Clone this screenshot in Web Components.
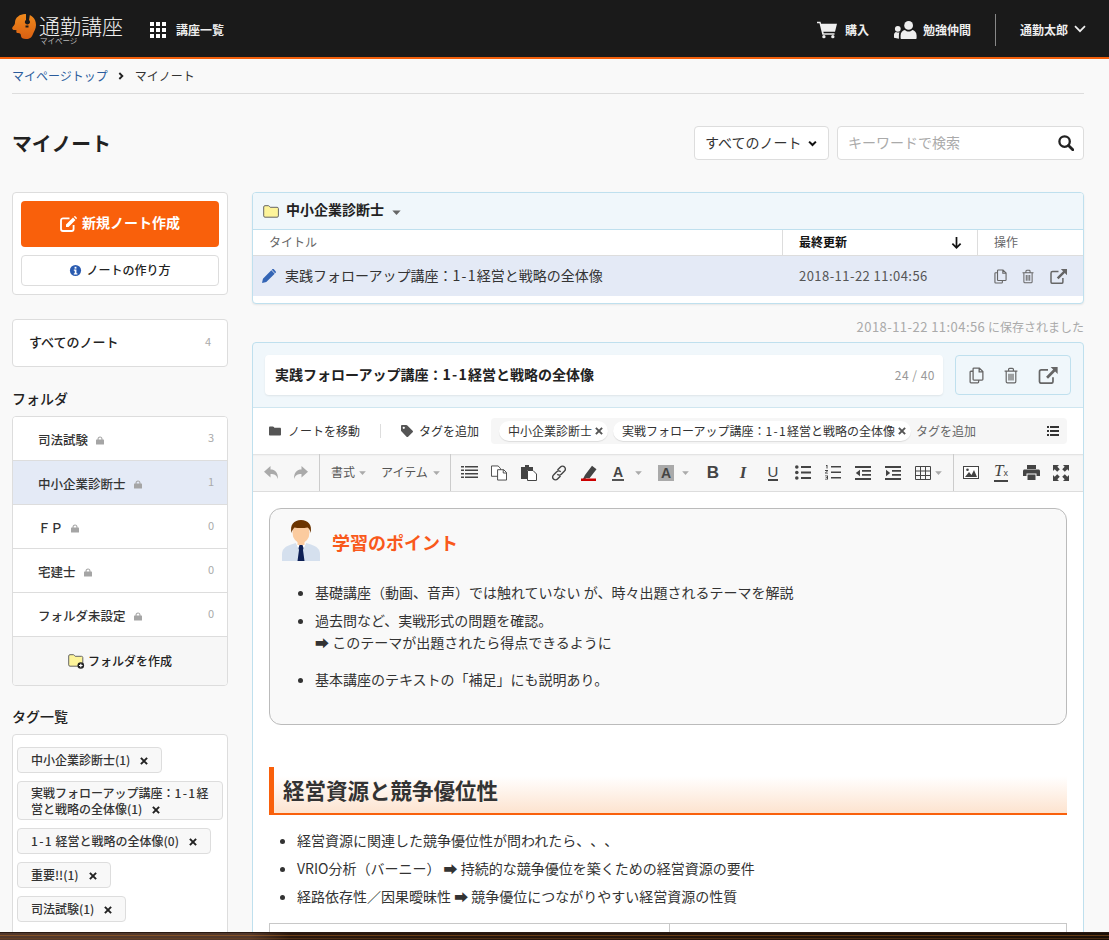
<!DOCTYPE html>
<html lang="ja"><head><meta charset="utf-8"><title>マイノート</title>
<style>
html,body{margin:0;height:940px;overflow:hidden;background:#f9f9f9;color:#333;font-family:"Noto Sans CJK JP","Liberation Sans",sans-serif;font-size:14px;line-height:1.4;text-spacing-trim:space-all}
</style></head><body>
<app-header></app-header>
<bread-crumb></bread-crumb>
<page-head></page-head>
<page-columns>
  <side-bar slot="side"></side-bar>
  <note-list slot="main"></note-list>
  <save-note slot="main"><span style="font-size:13px;letter-spacing:.45px">2018-11-22 11:04:56</span> に保存されました</save-note>
  <note-editor slot="main"></note-editor>
</page-columns>
<wood-strip></wood-strip>
<script>
const ICONS={
 cart:['0 0 24 20','<path fill="currentColor" d="M0 0h4.2l.7 2.6H24l-2.4 9.4H7.6l.5 2H21v1.8H6.4L3 1.8H0z"/><circle cx="8.3" cy="18" r="2" fill="currentColor"/><circle cx="19" cy="18" r="2" fill="currentColor"/>'],
 users:['0 0 23 18','<g fill="currentColor"><circle cx="14.6" cy="4.4" r="4.4"/><path d="M7.6 18c-.6 0-1-.4-1-1v-2.600c0-3 2-5.200 4.400-5.400 1 1 2.300 1.500 3.600 1.500s2.600-.5 3.600-1.500c2.400.2 4.400 2.400 4.400 5.400V17c0 .6-.4 1-1 1z"/><circle cx="3.800" cy="7.800" r="2.900"/><path d="M0 16.800v-3c0-1.600 1-2.800 2.200-2.900.6.500 1 .7 1.700.7s1-.1 1.500-.4c-.3.900-.5 1.900-.5 3.100v3.500z"/></g>'],
 chev:['0 0 12 8','<path fill="none" stroke="currentColor" stroke-width="1.700" d="M1 1.200l5 5 5-5"/>'],
 chevb:['0 0 12 8','<path fill="none" stroke="currentColor" stroke-width="2.800" d="M1.500 1.500L6 6l4.500-4.500"/>'],
 search:['0 0 16 16','<circle cx="6.600" cy="6.600" r="5.200" fill="none" stroke="currentColor" stroke-width="2.300"/><path d="M10.500 10.500l4.300 4.300" stroke="currentColor" stroke-width="2.800" stroke-linecap="round"/>'],
 edit:['0 0 17 16','<path fill="none" stroke="currentColor" stroke-width="1.800" d="M9.500 2.400H3a2 2 0 0 0-2 2V13a2 2 0 0 0 2 2h8.600a2 2 0 0 0 2-2V9"/><path fill="currentColor" d="M6 8.600L13 1.600l2.500 2.500-7 7H6zM13.800.8l.7-.6c.3-.2.6-.2.800 0l1.500 1.500c.2.200.2.500 0 .8l-.6.700z"/>'],
 info:['0 0 14 14','<circle cx="7" cy="7" r="6" fill="#2a5bb0"/><rect x="6" y="3" width="2" height="2" fill="#fff"/><path fill="#fff" d="M5.200 6h2.800v4h1v1.200H5.200V10h1V7.200h-1z"/>'],
 folder:['0 0 16 13','<path fill="#fdf49a" stroke="#666" stroke-width="1" d="M.7 2c0-.8.5-1.300 1.200-1.300h3.400c.5 0 .8.200 1.100.6l.8 1h6.900c.8 0 1.300.5 1.300 1.200v7.400c0 .8-.5 1.300-1.300 1.300H2c-.8 0-1.300-.5-1.300-1.300z"/>'],
 folderplus:['0 0 17 15','<path fill="#fdf49a" stroke="#666" stroke-width="1" d="M.7 2c0-.8.5-1.300 1.200-1.300h3.400c.5 0 .8.200 1.100.6l.8 1h6.300c.8 0 1.300.5 1.300 1.200v7.400c0 .8-.5 1.300-1.300 1.300H2c-.8 0-1.300-.5-1.300-1.300z"/><circle cx="12.800" cy="11.500" r="3.300" fill="#222"/><path d="M12.800 9.700v3.600M11 11.500h3.600" stroke="#fff" stroke-width="1.200"/>'],
 caret:['0 0 10 6','<path fill="currentColor" d="M0 .5h10L5 6z"/>'],
 pencil:['0 0 15 15','<path fill="#3465b5" d="M0 15l1-4.600L10 1.400l3.600 3.600-9 9zM11 .4c.5-.5 1.200-.5 1.700 0l1.900 1.900c.5.500.5 1.200 0 1.700l-.6.500-3.500-3.600z"/>'],
 copy:['0 0 14 16','<path fill="none" stroke="currentColor" stroke-width="1.200" d="M4.600 1H9.700L13 4.300v7.200c0 .5-.3.800-.8.800H4.600c-.5 0-.8-.3-.8-.8V1.800c0-.5.3-.8.800-.8zM9.500 1v3.500H13M3.800 4H1.800c-.5 0-.8.300-.8.800v9.400c0 .5.300.8.800.8h6.400c.5 0 .8-.3.800-.8v-1.900"/>'],
 trash:['0 0 14 16','<path fill="none" stroke="currentColor" stroke-width="1.200" d="M.6 3.600h12.800M2.200 3.600V14c0 .8.500 1.300 1.200 1.300h7.200c.7 0 1.200-.5 1.200-1.300V3.600M4.600 3.600V1.800c0-.6.400-1 1-1h2.800c.6 0 1 .4 1 1v1.800M5 6.200v6.700M7 6.200v6.700M9 6.200v6.700"/>'],
 ext:['0 0 17 15','<path fill="none" stroke="currentColor" stroke-width="1.500" d="M8.500 2.600H2.600C1.700 2.600 1 3.300 1 4.200v8.700c0 .9.700 1.400 1.600 1.400h8.800c.9 0 1.500-.6 1.500-1.400V9"/><path fill="currentColor" d="M10.800 0H17v6.200l-2.200-2.300-6.300 6.400-1.700-1.700 6.300-6.400z"/>'],
 down:['0 0 12 13','<path fill="none" stroke="currentColor" stroke-width="1.900" d="M6 0v11.500M1.500 7.200L6 11.700l4.500-4.500"/>'],
 lock:['0 0 9 9','<rect y="3.500" width="9" height="5.500" rx=".6" fill="currentColor"/><path fill="none" stroke="currentColor" stroke-width="1.200" d="M2.300 4V2.700C2.300 1.400 3.200.6 4.500.6s2.200.8 2.200 2.100V4"/>'],
 xmark:['0 0 9 9','<path stroke="currentColor" stroke-width="2.200" d="M1 1l7 7M8 1L1 8"/>'],
 fsolid:['0 0 13 10','<path fill="currentColor" d="M0 1.200C0 .5.500 0 1.200 0H4c.7 0 1 .3 1.300.7l.5.700h6c.7 0 1.200.5 1.200 1.200v6.200c0 .7-.5 1.200-1.200 1.200H1.200C.5 10 0 9.500 0 8.800z"/>'],
 tag:['0 0 13 13','<path fill="currentColor" d="M0 1.200C0 .5.500 0 1.200 0h4.600c.4 0 .8.200 1.100.5l5.700 5.700c.5.500.5 1.200 0 1.700l-4.900 4.700c-.5.500-1.200.500-1.700 0L.4 6.900C.1 6.600 0 6.300 0 5.900z"/><circle cx="3" cy="3" r="1.200" fill="#fff"/>'],
 list:['0 0 12 10','<path fill="currentColor" d="M0 0h2v2H0zM3 0h9v2H3zM0 4h2v2H0zM3 4h9v2H3zM0 8h2v2H0zM3 8h9v2H3z"/>'],
 undo:['0 0 14 13','<path fill="currentColor" d="M6.500 0v3.500C11 3.500 14 6 14 13c-1.400-3.800-3.500-5-7.500-5v3.500L0 5.800z"/>'],
 redo:['0 0 14 13','<path fill="currentColor" d="M7.500 0v3.500C3 3.500 0 6 0 13c1.400-3.800 3.500-5 7.500-5v3.500L14 5.800z"/>'],
 lines:['0 0 17 15','<path fill="currentColor" d="M0 1h3v1.500H0zM4 1h13v1.500H4zM0 4.500h3V6H0zM4 4.500h13V6H4zM0 8h3v1.500H0zM4 8h13v1.500H4zM0 11.500h3V13H0zM4 11.500h13V13H4z"/>'],
 copy2:['0 0 17 16','<path fill="#fff" stroke="#444" stroke-width="1" d="M.5.500h7L10 3v8.500H.5z"/><path fill="#fff" stroke="#444" stroke-width="1" d="M7 4.500h6.500l3 3v8H7z"/><path fill="none" stroke="#444" d="M13 4.500V8h3.500"/>'],
 paste:['0 0 16 16','<path fill="#444" d="M0 2h4V0h4v2h4v3H6v9H0z"/><path fill="#fff" stroke="#444" d="M6.500 5.500H12l3.500 3.500v6.500h-9z"/>'],
 link:['0 0 16 16','<path fill="none" stroke="#444" stroke-width="1.400" d="M6.500 5l3-3a2.700 2.700 0 0 1 4 0 2.700 2.700 0 0 1 0 4l-3.200 3.200a2.700 2.700 0 0 1-4 0M9.500 11l-3 3a2.700 2.700 0 0 1-4 0 2.700 2.700 0 0 1 0-4l3.200-3.200a2.700 2.700 0 0 1 4 0"/>'],
 marker:['0 0 16 16','<path fill="#444" d="M4 10L11 .8l4.500 3.500-7 9-3-.3-1.300 1H2z"/><rect x="0" y="13.500" width="15" height="2.500" fill="#c00"/>'],
 ul:['0 0 16 15','<g fill="#444"><circle cx="1.800" cy="2" r="1.800"/><circle cx="1.800" cy="7.500" r="1.800"/><circle cx="1.800" cy="13" r="1.800"/><path d="M6 1h10v2H6zM6 6.500h10v2H6zM6 12h10v2H6z"/></g>'],
 ol:['0 0 16 15','<g fill="#444"><path d="M6 1h10v1.600H6zM6 6.500h10v1.600H6zM6 12h10v1.600H6zM1 0h1.500v3.600H1.500V1H1zM0 5h3v1L1 7.800h2v.8H0v-.8l2-1.900H0zM0 10.500h3v4H0v-.8h2V13H.7v-.7H2v-1H0z"/></g>'],
 outdent:['0 0 16 14','<path fill="#444" d="M0 0h16v2H0zM7 4h9v1.800H7zM7 8h9v1.800H7zM0 12h16v2H0zM5 3.800v6.400L.8 7z"/>'],
 indent:['0 0 16 14','<path fill="#444" d="M0 0h16v2H0zM7 4h9v1.800H7zM7 8h9v1.800H7zM0 12h16v2H0zM1 3.800v6.400L5.200 7z"/>'],
 table:['0 0 16 14','<path fill="none" stroke="#444" stroke-width="1" d="M.5.500h15v13H.5zM.5 5h15M.5 9.500h15M5.500.500v13M10.500.500v13"/>'],
 image:['0 0 16 13','<rect x=".5" y=".5" width="15" height="12" fill="#fff" stroke="#444"/><path fill="#444" d="M2 11l4-5 2.500 3L11 4l3 7z"/><circle cx="4.500" cy="3.800" r="1.300" fill="#444"/>'],
 print:['0 0 17 15','<path fill="#444" d="M4 0h9v4H4zM1.500 4.500h14c.8 0 1.500.7 1.500 1.500v5h-3.500V8.500h-10V11H0V6c0-.8.700-1.500 1.500-1.500zM4.500 9.500h8V15h-8z"/>'],
 full:['0 0 16 16','<path fill="#444" d="M0 0h6L4.300 1.700 6.800 4.200 4.200 6.800 1.700 4.300 0 6zM16 0v6l-1.700-1.700-2.500 2.500-2.600-2.600 2.500-2.500L10 0zM0 16v-6l1.700 1.700 2.500-2.500 2.600 2.600-2.500 2.500L6 16zM16 16h-6l1.700-1.700-2.500-2.500 2.600-2.600 2.500 2.500L16 10z"/>'],
 logo:['0 0 24 25','<defs><linearGradient id="lg" x1="0" y1="0" x2="0" y2="1"><stop offset="0" stop-color="#f08a1c"/><stop offset="1" stop-color="#d95f12"/></linearGradient></defs><path fill="url(#lg)" d="M13 0c6 0 11 4 11 11 0 4-2 6-3 9-1 3-3 5-7 5-3 0-5-1-5-3s-1-3-3-3c-1.500 0-2-1-1.500-2.200C5 16 3.500 16.500 1.500 16 0 15.500-.3 14 1 12.600 2.500 11 3 10 3 8.500 3 3.500 8 0 13 0z"/><path fill="#1a1a1a" d="M14 0h4l-1 6c1 .8 1.300 2 .8 3-.6 1.200-2 1.800-3.300 1.300-1.300-.5-2-1.800-1.500-3.100.2-.6.500-1 1-1.300zM13.500 11.500h3v2h-3z"/>'],
 person:['0 0 38 41','<path fill="#d5e0ee" d="M0 41v-7c0-5 4-8 9-9.500l5-1.500h10l5 1.500c5 1.500 9 4.500 9 9.500v7z"/><path fill="#fff" d="M14 23h10l-2 5h-6z"/><path fill="#0d1f55" d="M17.500 25h3l1 3-.5 2 1.500 11h-7l1.500-11-.5-2z"/><ellipse cx="19" cy="12.500" rx="8.500" ry="10.500" fill="#fbcb9f"/><rect x="15.500" y="19" width="7" height="6" fill="#fbcb9f"/><path fill="#6b3400" d="M9.500 13C7.500 5 12 0 19 0s11.500 5 9.500 13c-.5-3-1.500-4.500-3-5.500C21 8.500 15 8 12.500 7.500 11 9 10 10.500 9.500 13z"/>']
};
const ONE='<span style="letter-spacing:1.300px">1-1</span>';
function def(tag,style,html,init){
  const t=document.createElement('template');
  t.innerHTML=`<style>${style}</style>${html}`;
  customElements.define(tag,class extends HTMLElement{
    connectedCallback(){
      if(this.shadowRoot)return;
      this.attachShadow({mode:'open'}).appendChild(t.content.cloneNode(true));
      if(init)init.call(this,this.shadowRoot);
    }
  });
}
customElements.define('x-icon',class extends HTMLElement{
  connectedCallback(){
    if(this.shadowRoot)return;
    const n=this.getAttribute('name'),w=this.getAttribute('w')||14,h=this.getAttribute('h')||w,c=this.getAttribute('c')||'inherit';
    const [vb,body]=ICONS[n];
    this.attachShadow({mode:'open'}).innerHTML=`<style>:host{display:inline-flex;flex:none;width:${w}px;height:${h}px;color:${c}}svg{display:block;width:100%;height:100%}</style><svg xmlns="http://www.w3.org/2000/svg" viewBox="${vb}" preserveAspectRatio="xMidYMid meet">${body}</svg>`;
  }
});
def('app-header',`
:host{display:flex;align-items:center;box-sizing:border-box;height:59px;background:#1a1a1a;border-bottom:2px solid #f4600c;color:#eee;padding:2px 23px 0 12px}
.logo{display:flex;gap:3px;align-items:flex-start;width:138px;height:35px;margin-top:3px}
.brand{display:flex;flex-direction:column;align-items:flex-start;margin-top:-1px}
.name{font-size:21px;line-height:24px;font-weight:300;color:#eee}
.sub{font-size:7.5px;line-height:8px;color:#bbb;margin-left:1px}
.grid{display:grid;grid-template-columns:repeat(3,4px);grid-auto-rows:4px;gap:2px;margin-right:10px}
.grid i{background:#fff}
.t{font-size:12px;font-weight:700;color:#eee;position:relative;top:1px}
.sp{flex:1}
.it{display:flex;align-items:center}
.div{width:1px;height:32px;background:#888;margin:0 24px}
`,`<div class="logo"><x-icon name="logo" w="24" h="25"></x-icon><div class="brand"><span class="name">通勤講座</span><span class="sub">マイページ</span></div></div>
<div class="grid"><i></i><i></i><i></i><i></i><i></i><i></i><i></i><i></i><i></i></div><span class="t">講座一覧</span>
<span class="sp"></span>
<div class="it" style="margin-right:25px"><x-icon name="cart" w="20" h="18" style="margin-right:8px"></x-icon><span class="t">購入</span></div>
<div class="it"><x-icon name="users" w="23" h="18" style="margin-right:6px"></x-icon><span class="t">勉強仲間</span></div>
<span class="div"></span>
<div class="it"><span class="t">通勤太郎</span><x-icon name="chev" w="12" h="8" style="margin-left:6px"></x-icon></div>`);
def('bread-crumb',`
:host{display:flex;align-items:center;box-sizing:border-box;height:35px;margin:0 25px 0 12px;border-bottom:1px solid #ddd;font-size:12px;color:#333}
a{color:#2b5c9c;text-decoration:none}
`,`<a href="#">マイページトップ</a><x-icon name="chevb" w="8" h="8" c="#222" style="margin:0 10px 0 9px;transform:rotate(-90deg)"></x-icon><span>マイノート</span>`);
def('page-head',`
:host{display:flex;align-items:center;height:34px;margin:32px 25px 32px 12px}
h1{margin:0;font-size:19.800px;line-height:28px;font-weight:700;color:#222;flex:1}
.sel,.q{display:flex;align-items:center;box-sizing:border-box;height:34px;background:#fff;border:1px solid #ddd;border-radius:4px}
.sel{width:135px;padding:0 11px 0 10px;font-size:14px;margin-right:8px;justify-content:space-between}
.q{width:247px;padding:0 9px 0 10px;color:#aaa;font-size:14px;justify-content:space-between}
`,`<h1>マイノート</h1><div class="sel"><span>すべてのノート</span><x-icon name="chevb" w="9" h="7" c="#111"></x-icon></div><div class="q"><span>キーワードで検索</span><x-icon name="search" w="16" h="16" c="#222"></x-icon></div>`);
def('page-columns',`
:host{display:flex;gap:24px;margin:0 25px 0 12px;align-items:flex-start}
.a{width:216px;flex:none}.b{width:832px;flex:none}
`,`<div class="a"><slot name="side"></slot></div><div class="b"><slot name="main"></slot></div>`);
def('folder-row',`
:host{display:flex;align-items:center;box-sizing:border-box;height:44px;padding:0 13px 0 25px;border-bottom:1px solid #ddd;font-weight:500;color:#333;background:#fff}
:host([on]){background:#e4eaf6}
span{font-size:12.500px;position:relative;top:1px}
b{margin-left:auto;font-weight:400;font-size:11px;color:#aaa;position:relative;top:-1px}
x-icon{margin:3px 0 0 8px}
`,`<span><slot></slot></span><x-icon name="lock" w="8" h="9" c="#a5a5a5"></x-icon><b></b>`,function(r){r.querySelector('b').textContent=this.getAttribute('n')});
def('tag-chip',`
:host{display:flex;align-items:center;box-sizing:border-box;min-height:26px;padding:3px 13px;background:#f8f8f8;border:1px solid #ddd;border-radius:4px;font-size:12px;line-height:15.500px;font-weight:500;color:#333;max-width:206px}
x-icon{margin-left:10px}
`,`<span><slot></slot><x-icon name="xmark" w="8" h="8" c="#222"></x-icon></span>`);
def('side-bar',`
:host{display:block}
.card{background:#fff;border:1px solid #ddd;border-radius:4px;box-sizing:border-box}
.new{padding:8px}
.btn{display:flex;align-items:center;justify-content:center;height:46px;background:#f9600b;border-radius:4px;color:#fff;font-weight:700;font-size:14px;gap:5px}
.btn span{position:relative;top:-1px}
.how{display:flex;align-items:center;justify-content:center;box-sizing:border-box;height:31px;margin-top:8px;border:1px solid #ddd;border-radius:4px;font-size:12px;font-weight:500;color:#222;gap:4px}
.all{display:flex;align-items:center;justify-content:space-between;height:48px;margin-top:24px;padding:0 16px;font-size:13px;font-weight:500;color:#222}
.all span{position:relative;top:-1px}
.all b{font-weight:400;font-size:11px;color:#aaa;position:relative;top:-1px}
h3{margin:21px 0 8px;font-size:14px;line-height:20px;font-weight:500;color:#222}
.folders{overflow:hidden}
.mk{display:flex;align-items:center;justify-content:center;height:48px;background:#f7f7f7;font-size:12px;font-weight:500;color:#222;gap:3px}
.tags{display:flex;flex-direction:column;align-items:flex-start;gap:8px;padding:12px 4px 30px}
h3.t{margin:20px 0 8px}
`,`<div class="card new"><div class="btn"><x-icon name="edit" w="17" h="16"></x-icon><span>新規ノート作成</span></div><div class="how"><x-icon name="info" w="13" h="13"></x-icon><span>ノートの作り方</span></div></div>
<div class="card all"><span>すべてのノート</span><b>4</b></div>
<h3>フォルダ</h3>
<div class="card folders">
<folder-row n="3">司法試験</folder-row><folder-row n="1" on>中小企業診断士</folder-row><folder-row n="0">ＦＰ</folder-row><folder-row n="0">宅建士</folder-row><folder-row n="0">フォルダ未設定</folder-row>
<div class="mk"><x-icon name="folderplus" w="17" h="15"></x-icon><span>フォルダを作成</span></div></div>
<h3 class="t">タグ一覧</h3>
<div class="card tags"><tag-chip>中小企業診断士(1)</tag-chip><tag-chip>実戦フォローアップ講座：${ONE}経営と戦略の全体像(1)</tag-chip><tag-chip>${ONE} 経営と戦略の全体像(0)</tag-chip><tag-chip>重要!!(1)</tag-chip><tag-chip>司法試験(1)</tag-chip></div>`);
def('note-list',`
:host{display:block;background:#fff;border:1px solid #bfe0ee;border-radius:4px;box-shadow:0 1px 2px rgba(0,0,0,.08);padding-bottom:7px;overflow:hidden}
.h{display:flex;align-items:center;height:37px;box-sizing:border-box;background:#f0f7fb;border-bottom:1px solid #bfe0ee;padding-left:10px;font-size:14px;font-weight:700;color:#222}
.h span{position:relative;top:-1px}
.th,.tr{display:grid;grid-template-columns:529px 195px 1fr;align-items:center}
.th{height:26px;box-sizing:border-box;border-bottom:1px solid #ddd;font-size:12px;color:#666}
.th>div{height:100%;display:flex;align-items:center;box-sizing:border-box;padding-left:16px}
.th>div+div{border-left:1px solid #ddd}
.th .u{color:#111;font-weight:700;justify-content:space-between;padding-right:15px}
.tr{height:40px;background:#e4eaf6;font-size:14px;color:#333}
.tt{display:flex;align-items:center;padding-left:9px;gap:9px}
.d{padding-left:17px;font-size:13px;color:#555;letter-spacing:.45px}
.ops{display:flex;align-items:center;padding-left:17px;color:#666}
`,`<div class="h"><x-icon name="folder" w="16" h="13" style="margin-right:7px"></x-icon><span>中小企業診断士</span><x-icon name="caret" w="9" h="5" c="#666" style="margin:3px 0 0 8px"></x-icon></div>
<div class="th"><div>タイトル</div><div class="u"><span>最終更新</span><x-icon name="down" w="11" h="12" c="#111"></x-icon></div><div>操作</div></div>
<div class="tr"><div class="tt"><x-icon name="pencil" w="14" h="14"></x-icon><span>実践フォローアップ講座：${ONE}経営と戦略の全体像</span></div><div class="d">2018-11-22 11:04:56</div><div class="ops"><x-icon name="copy" w="13" h="15" style="margin-right:15px"></x-icon><x-icon name="trash" w="12" h="15" style="margin-right:16px"></x-icon><x-icon name="ext" w="17" h="15"></x-icon></div></div>`);
def('save-note',`:host{display:block;text-align:right;font-size:12px;line-height:16px;color:#aaa;padding:15px 0 7px}`,`<slot></slot>`);
def('pill-tag',`
:host{display:flex;align-items:center;height:20px;background:#fff;border-radius:10px;box-shadow:0 1px 1px rgba(0,0,0,.1);padding:0 5px 0 9px;font-size:12px;color:#333;gap:3px;white-space:nowrap}
`,`<span><slot></slot></span><x-icon name="xmark" w="8" h="8" c="#555"></x-icon>`);
def('tool-bar',`
:host{display:flex;align-items:center;box-sizing:border-box;height:38px;background:#f7f7f7;border-bottom:1px solid #ddd;box-shadow:inset 0 2px 2px -1px rgba(0,0,0,.1);color:#444}
.g{display:flex;align-items:stretch;height:100%;box-sizing:border-box}
.g+.g{border-left:1px solid #ccc}
.b{display:flex;align-items:center;justify-content:center;width:30px;height:100%;flex:none;font-family:"Liberation Sans",sans-serif}
.c{justify-content:flex-start;box-sizing:border-box}
.tx{font-size:12px;color:#555;display:flex;align-items:center}
.L{font-size:17px;font-weight:700;color:#444}
.A{font-size:14px;font-weight:700;border-bottom:2px solid #555;line-height:14px;padding:0 1px}
.Ab{background:#aaa;font-size:14px;font-weight:700;line-height:16px;padding:0 3px;border-bottom:0}
.T{font-size:17px;font-style:italic;font-family:"Liberation Serif",serif;border-bottom:2px solid #444;line-height:14px}
.T small{font-size:9px;font-style:normal;font-family:"Liberation Sans",sans-serif}
`,`<div class="g" style="padding-left:3px;width:66px"><span class="b"><x-icon name="undo" w="14" h="13" c="#aaa"></x-icon></span><span class="b"><x-icon name="redo" w="14" h="13" c="#aaa"></x-icon></span></div>
<div class="g" style="padding-left:11px;width:131px"><span class="tx">書式<x-icon name="caret" w="7" h="4" c="#aaa" style="margin:0 15px 0 4px"></x-icon></span><span class="tx">アイテム<x-icon name="caret" w="7" h="4" c="#aaa" style="margin-left:5px"></x-icon></span></div>
<div class="g" style="padding-left:3px;width:503px">
<span class="b"><x-icon name="lines" w="17" h="15"></x-icon></span><span class="b"><x-icon name="copy2" w="16" h="16"></x-icon></span><span class="b"><x-icon name="paste" w="16" h="16"></x-icon></span><span class="b"><x-icon name="link" w="16" h="16"></x-icon></span><span class="b"><x-icon name="marker" w="16" h="16"></x-icon></span>
<span class="b c" style="width:48px;padding-left:8px"><span class="A">A</span><x-icon name="caret" w="7" h="4" c="#aaa" style="margin-left:11px"></x-icon></span>
<span class="b c" style="width:46px;padding-left:6px"><span class="A Ab">A</span><x-icon name="caret" w="7" h="4" c="#aaa" style="margin-left:8px"></x-icon></span>
<span class="b L">B</span><span class="b L" style="font-style:italic;font-family:'Liberation Serif',serif">I</span><span class="b"><span style="font-size:15px;border-bottom:2px solid #444;line-height:14px;color:#444">U</span></span>
<span class="b"><x-icon name="ul" w="16" h="15"></x-icon></span><span class="b"><x-icon name="ol" w="16" h="15"></x-icon></span><span class="b"><x-icon name="outdent" w="16" h="14"></x-icon></span><span class="b"><x-icon name="indent" w="16" h="14"></x-icon></span>
<span class="b c" style="width:45px;padding-left:7px"><x-icon name="table" w="16" h="14"></x-icon><x-icon name="caret" w="7" h="4" c="#aaa" style="margin-left:4px"></x-icon></span></div>
<div class="g" style="padding-left:2px"><span class="b"><x-icon name="image" w="16" h="13"></x-icon></span><span class="b"><span class="T">T<small>x</small></span></span><span class="b"><x-icon name="print" w="17" h="15"></x-icon></span><span class="b"><x-icon name="full" w="16" h="16"></x-icon></span></div>`);
def('point-box',`
:host{display:block;box-sizing:border-box;height:217px;background:#f9f9f9;border:1px solid #bbb;border-radius:12px;padding:11px 12px}
.h{display:flex;align-items:center;gap:12px;height:41px}
.h b{font-size:18px;line-height:24px;color:#f9591b;font-weight:700;position:relative;top:1px}
ul{margin:20px 0 0;padding:0 0 0 33px;font-size:14px;line-height:22px;color:#333}
li{margin-bottom:6px}
li.x{margin-bottom:15px}
`,`<div class="h"><x-icon name="person" w="38" h="41"></x-icon><b>学習のポイント</b></div>
<ul><li>基礎講座（動画、音声）では触れていない が、時々出題されるテーマを解説</li><li class="x">過去問など、実戦形式の問題を確認。<br>➡ このテーマが出題されたら得点できるように</li><li>基本講座のテキストの「補足」にも説明あり。</li></ul>`);
def('note-editor',`
:host{display:block;background:#f0f7fb;border:1px solid #bfe0ee;border-radius:4px 4px 0 0}
.top{display:flex;gap:12px;padding:12px;border-bottom:1px solid #cfe6f0}
.title{flex:1;display:flex;align-items:center;justify-content:space-between;height:40px;box-sizing:border-box;background:#fff;border-radius:4px;box-shadow:0 1px 2px rgba(0,0,0,.08);padding:0 8px 0 10px;font-weight:700;font-size:14px;color:#222}
.title small{font-size:12px;font-weight:400;color:#999;letter-spacing:.5px}
.act{display:flex;align-items:center;justify-content:center;gap:20px;box-sizing:border-box;width:116px;height:40px;border:1px solid #bfe0ee;border-radius:4px;color:#666}
.row{display:flex;align-items:center;height:46px;box-sizing:border-box;background:#fff;padding:0 16px;font-size:12px;color:#333}
.row>x-icon{margin-right:7px}
.vd{width:1px;height:14px;background:#ddd;margin:0 20px}
.box{display:flex;align-items:center;height:26px;flex:1;margin-left:12px;background:#f6f6f6;border-radius:4px;padding:0 8px;gap:5px;min-width:0;white-space:nowrap}
.box .add{color:#666;flex:1}
.body{background:#fff;padding:16px}
h2{margin:42px 0 0;box-sizing:border-box;height:48px;display:flex;align-items:center;padding:0 0 0 9px;border-left:5px solid #f9600b;border-bottom:2px solid #f9600b;font-size:21.500px;font-weight:700;color:#333;background:linear-gradient(#fff 20%,#fde3cf)}
ul{margin:14px 0 0;padding:0 0 0 28px;line-height:22px;font-size:14px}
li{margin-bottom:6px}
.tb{display:grid;grid-template-columns:399px 1fr;margin-top:16px;border:1px solid #c8c8c8;height:60px}
.tb div+div{border-left:1px solid #c8c8c8}
`,`<div class="top"><div class="title"><span>実践フォローアップ講座：${ONE}経営と戦略の全体像</span><small>24 / 40</small></div><div class="act"><x-icon name="copy" w="15" h="17"></x-icon><x-icon name="trash" w="14" h="17"></x-icon><x-icon name="ext" w="20" h="17"></x-icon></div></div>
<div class="row"><x-icon name="fsolid" w="12" h="10" c="#555"></x-icon><span>ノートを移動</span><span class="vd"></span><x-icon name="tag" w="12" h="12" c="#555" style="margin-right:6px"></x-icon><span>タグを追加</span>
<div class="box"><pill-tag>中小企業診断士</pill-tag><pill-tag>実戦フォローアップ講座：${ONE}経営と戦略の全体像</pill-tag><span class="add">タグを追加</span><x-icon name="list" w="12" h="10" c="#333"></x-icon></div></div>
<tool-bar></tool-bar>
<div class="body"><point-box></point-box>
<h2>経営資源と競争優位性</h2>
<ul><li>経営資源に関連した競争優位性が問われたら、、、</li><li>VRIO分析（バーニー） ➡ 持続的な競争優位を築くための経営資源の要件</li><li>経路依存性／因果曖昧性 ➡ 競争優位につながりやすい経営資源の性質</li></ul>
<div class="tb"><div></div><div></div></div></div>`);
def('wood-strip',`
:host{position:fixed;left:0;right:0;bottom:0;height:8px;border-top:1px solid #2a1a12;box-sizing:border-box;background:
 linear-gradient(rgba(0,0,0,0) 35%,rgba(190,110,30,.45) 35% 50%,rgba(0,0,0,0) 50%) 330px 0/190px 100% repeat-x,
 linear-gradient(rgba(0,0,0,0) 65%,rgba(120,70,25,.5) 65% 85%,rgba(0,0,0,0) 85%) 280px 0/310px 100% repeat-x,
 linear-gradient(90deg,#52382c 0 250px,#2a180e 290px,#1a0f08 100%)}
`,``);
</script>
</body></html>
